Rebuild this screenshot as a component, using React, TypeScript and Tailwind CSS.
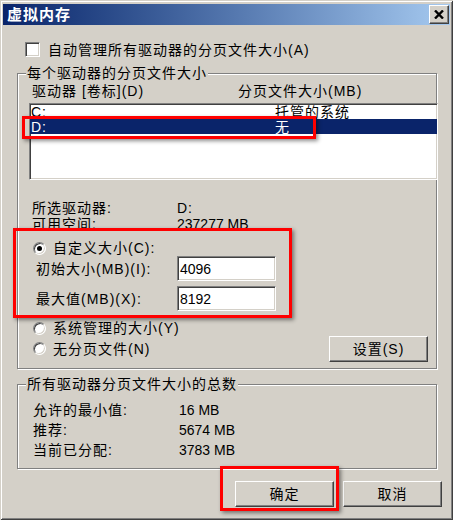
import type { ReactNode } from 'react';

const sunken =
  'border border-t-[#808080] border-l-[#808080] border-b-white border-r-white shadow-[inset_1px_1px_0_#404040,inset_-1px_-1px_0_#d4d0c8]';
const raised =
  'border border-t-white border-l-white border-b-[#404040] border-r-[#404040] shadow-[inset_-1px_-1px_0_#808080]';

function Checkbox() {
  return <div className={`w-[15px] h-[15px] bg-white ${sunken}`} />;
}

function Radio({ on }: { on?: boolean }) {
  return (
    <div className={`w-[13px] h-[13px] rounded-full bg-white flex items-center justify-center ${sunken}`}>
      {on && <div className="w-[5px] h-[5px] rounded-full bg-black" />}
    </div>
  );
}

function Field({ value }: { value: string }) {
  return (
    <div className={`w-[99px] h-[25px] bg-white pl-[2px] flex items-center tracking-normal ${sunken}`}>
      {value}
    </div>
  );
}

function Btn({ children, className = '' }: { children: ReactNode; className?: string }) {
  return (
    <div className={`w-[99px] h-[26px] flex items-center justify-center bg-[#d4d0c8] ${raised} ${className}`}>
      {children}
    </div>
  );
}

function Group({ label, className = '', children }: { label: string; className?: string; children: ReactNode }) {
  return (
    <div
      className={`relative ml-[17px] w-[420px] border border-[#808080] shadow-[1px_1px_0_#fff,inset_1px_1px_0_#fff] ${className}`}
    >
      <span className="absolute left-[8px] -top-[8px] bg-[#d4d0c8] px-[1px] leading-[14px] whitespace-nowrap">
        {label}
      </span>
      {children}
    </div>
  );
}

function Mark({ className }: { className: string }) {
  // red annotation frames drawn over the dialog
  return (
    <div
      className={`absolute border-[3px] border-[#ff0000] shadow-[2px_2px_4px_rgba(0,0,0,0.45)] pointer-events-none ${className}`}
    />
  );
}

export default function App() {
  return (
    <div className="w-[456px] h-[521px] bg-white text-black text-[14px] leading-[14px] tracking-[1px] font-['Liberation_Sans','Noto_Sans_CJK_SC',sans-serif]">
      <div className="relative w-[453px] h-[520px] bg-[#d4d0c8] flex flex-col shadow-[inset_1px_1px_0_#d4d0c8,inset_-1px_-1px_0_#404040,inset_2px_2px_0_#fff,inset_-2px_-2px_0_#808080]">
        {/* Title bar */}
        <div className="mt-[4px] mx-[3px] h-[21px] flex items-center bg-gradient-to-r from-[#0a246a] to-[#a6caf0] pl-[4px] pr-[1px]">
          <span className="text-white font-bold text-[15px] tracking-[1px]">虚拟内存</span>
          <div className={`ml-auto w-[20px] h-[19px] flex items-center justify-center bg-[#d4d0c8] ${raised}`}>
            <svg width="10" height="9" viewBox="0 0 10 9">
              <path d="M1 0.5 L9 8.5 M9 0.5 L1 8.5" stroke="#000" strokeWidth="2.4" />
            </svg>
          </div>
        </div>

        {/* Auto manage */}
        <div className="mt-[17px] h-[15px] pl-[25px] flex items-center gap-[8px]">
          <Checkbox />
          <span>自动管理所有驱动器的分页文件大小(A)</span>
        </div>

        {/* Per drive */}
        <Group label="每个驱动器的分页文件大小" className="mt-[16px] h-[296px]">
          <div className="mt-[9px] h-[15px] pl-[14px] flex items-center">
            <span className="w-[206px]">驱动器 [卷标](D)</span>
            <span>分页文件大小(MB)</span>
          </div>
          <div className={`mt-[5px] ml-[11px] w-[409px] h-[77px] bg-white ${sunken}`}>
            <div className="h-[15px] flex items-center pl-[1px]">
              <span className="w-[244px]">C:</span>
              <span>托管的系统</span>
            </div>
            <div className="h-[15px] flex items-center pl-[1px] bg-[#0a246a] text-white">
              <span className="w-[244px]">D:</span>
              <span>无</span>
            </div>
          </div>

          <div className="mt-[20px] pl-[14px]">
            <div className="h-[16px] flex items-center">
              <span className="w-[145px]">所选驱动器:</span>
              <span>D:</span>
            </div>
            <div className="h-[16px] flex items-center">
              <span className="w-[145px]">可用空间:</span>
              <span className="tracking-normal">237277 MB</span>
            </div>
          </div>

          <div className="mt-[9px] h-[14px] pl-[15px] flex items-center gap-[7px]">
            <Radio on />
            <span>自定义大小(C):</span>
          </div>
          <div className="mt-[1px] h-[25px] pl-[18px] flex items-center">
            <span className="w-[141px]">初始大小(MB)(I):</span>
            <Field value="4096" />
          </div>
          <div className="mt-[5px] h-[25px] pl-[18px] flex items-center">
            <span className="w-[141px]">最大值(MB)(X):</span>
            <Field value="8192" />
          </div>
          <div className="mt-[10px] h-[14px] pl-[15px] flex items-center gap-[7px]">
            <Radio />
            <span>系统管理的大小(Y)</span>
          </div>
          <div className="mt-[1px] h-[25px] pl-[15px] pr-[8px] flex items-center">
            <Radio />
            <span className="ml-[7px]">无分页文件(N)</span>
            <Btn className="ml-auto h-[25px]">设置(S)</Btn>
          </div>
        </Group>

        {/* Totals */}
        <Group label="所有驱动器分页文件大小的总数" className="mt-[15px] h-[85px]">
          <div className="mt-[15px] pl-[15px]">
            <div className="h-[20px] flex items-center">
              <span className="w-[146px]">允许的最小值:</span>
              <span className="tracking-normal">16 MB</span>
            </div>
            <div className="h-[20px] flex items-center">
              <span className="w-[146px]">推荐:</span>
              <span className="tracking-normal">5674 MB</span>
            </div>
            <div className="h-[20px] flex items-center">
              <span className="w-[146px]">当前已分配:</span>
              <span className="tracking-normal">3783 MB</span>
            </div>
          </div>
        </Group>

        {/* Buttons */}
        <div className="mt-[12px] ml-[235px] flex gap-[9px]">
          <Btn>确定</Btn>
          <Btn>取消</Btn>
        </div>

        <Mark className="left-[22px] top-[116px] w-[294px] h-[23px]" />
        <Mark className="left-[13px] top-[228px] w-[279px] h-[90px]" />
        <Mark className="left-[220px] top-[466px] w-[119px] h-[45px]" />
      </div>
    </div>
  );
}
